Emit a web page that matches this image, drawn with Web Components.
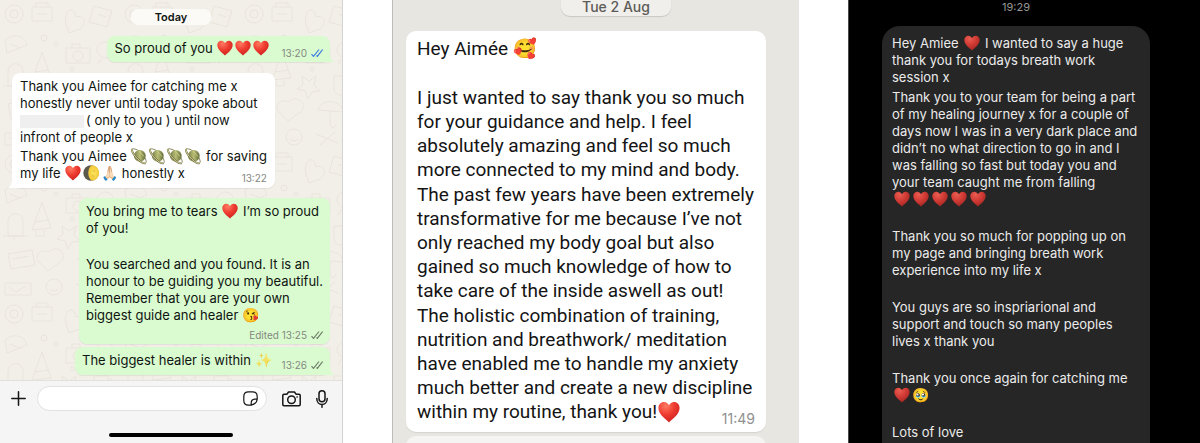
<!DOCTYPE html>
<html lang="en">
<head>
<meta charset="utf-8">
<meta name="viewport" content="width=device-width, initial-scale=1">
<title>Client messages</title>
<style>
body { margin: 0; background: #fff; }
</style>
</head>
<body>
<message-gallery>
  <chat-screen>
    <date-pill>Today</date-pill>
    <chat-bubble side="out" inline tail>
      <p>So proud of you <chat-emoji name="heart"></chat-emoji><chat-emoji name="heart"></chat-emoji><chat-emoji name="heart"></chat-emoji></p>
      <message-meta slot="meta" ticks="read">13:20</message-meta>
    </chat-bubble>
    <chat-bubble side="in" tail>
      <p>Thank you Aimee for catching me x<br>honestly never until today spoke about<br><redacted-name></redacted-name>( only to you ) until now<br>infront of people x</p>
      <p>Thank you Aimee <chat-emoji name="planet"></chat-emoji><chat-emoji name="planet"></chat-emoji><chat-emoji name="planet"></chat-emoji><chat-emoji name="planet"></chat-emoji> for saving<br>my life <chat-emoji name="heart"></chat-emoji><chat-emoji name="moon"></chat-emoji><chat-emoji>🙏🏻</chat-emoji> honestly x</p>
      <message-meta slot="meta">13:22</message-meta>
    </chat-bubble>
    <chat-bubble side="out" stacked>
      <p>You bring me to tears <chat-emoji name="heart"></chat-emoji> I’m so proud<br>of you!<br><br></p>
      <p>You searched and you found. It is an<br>honour to be guiding you my beautiful.<br>Remember that you are your own<br>biggest guide and healer <chat-emoji>😘</chat-emoji></p>
      <message-meta slot="meta" ticks="sent">Edited 13:25</message-meta>
    </chat-bubble>
    <chat-bubble side="out" inline tall tail>
      <p>The biggest healer is within <chat-emoji faded>✨</chat-emoji></p>
      <message-meta slot="meta" ticks="sent">13:26</message-meta>
    </chat-bubble>
    <chat-composer slot="footer"></chat-composer>
  </chat-screen>

  <letter-screen>
    <span slot="date">Tue 2 Aug</span>
    <p>Hey Aimée <chat-emoji>🥰</chat-emoji><br><br></p>
    <p>I just wanted to say thank you so much<br>for your guidance and help. I feel<br>absolutely amazing and feel so much<br>more connected to my mind and body.</p>
    <p>The past few years have been extremely<br>transformative for me because I’ve not<br>only reached my body goal but also<br>gained so much knowledge of how to<br>take care of the inside aswell as out!</p>
    <p>The holistic combination of training,<br>nutrition and breathwork/ meditation<br>have enabled me to handle my anxiety<br>much better and create a new discipline<br>within my routine, thank you!<chat-emoji name="heart"></chat-emoji></p>
    <time slot="time">11:49</time>
  </letter-screen>

  <dark-screen>
    <time slot="time">19:29</time>
    <p>Hey Amiee <chat-emoji name="heart"></chat-emoji> I wanted to say a huge<br>thank you for todays breath work<br>session x</p>
    <p>Thank you to your team for being a part<br>of my healing journey x for a couple of<br>days now I was in a very dark place and<br>didn’t no what direction to go in and I<br>was falling so fast but today you and<br>your team caught me from falling<br><chat-emoji name="heart"></chat-emoji><chat-emoji name="heart"></chat-emoji><chat-emoji name="heart"></chat-emoji><chat-emoji name="heart"></chat-emoji><chat-emoji name="heart"></chat-emoji><br><br></p>
    <p>Thank you so much for popping up on<br>my page and bringing breath work<br>experience into my life x<br><br></p>
    <p>You guys are so inspriarional and<br>support and touch so many peoples<br>lives x thank you<br><br></p>
    <p>Thank you once again for catching me<br><chat-emoji name="heart"></chat-emoji><chat-emoji>🥹</chat-emoji><br><br></p>
    <p>Lots of love</p>
  </dark-screen>
</message-gallery>

<script>
const define = (tag, html, setup) => {
  const template = document.createElement('template');
  template.innerHTML = html;
  customElements.define(tag, class extends HTMLElement {
    connectedCallback() {
      if (this.shadowRoot) return;
      const root = this.attachShadow({ mode: 'open' });
      root.append(template.content.cloneNode(true));
      if (setup) setup(this, root);
    }
  });
};

define('message-gallery', `
<style>
:host { display: grid; grid-template-columns: 343fr 407fr 352fr; column-gap: 49px; height: 100vh; overflow: hidden; }
</style>
<slot></slot>`);

define('chat-screen', `
<style>
:host { display: flex; flex-direction: column; position: relative; box-sizing: border-box; min-width: 0; overflow: hidden;
  background: #f2efe8; border-right: 1px solid #d2d2d0; font: 13px/17px Inter, "Liberation Sans", sans-serif; color: #101510; }
.wall { position: absolute; inset: 0; width: 100%; height: 100%; }
.thread { position: relative; flex: 1; display: flex; flex-direction: column; padding: 9px 12px 0; }
</style>
<svg class="wall" aria-hidden="true">
  <defs>
    <pattern id="doodle" width="120" height="150" patternUnits="userSpaceOnUse">
      <g fill="none" stroke="#e9e4db" stroke-width="1">
        <circle cx="14" cy="14" r="9"/><circle cx="14" cy="14" r="4"/>
        <path d="M32 7h20v14H32zM36 7v-4h12v4M37 14h10"/>
        <path d="M66 24c-3-14 8-20 10-7 8-3 12 6 4 12l-11 4z"/>
        <path d="M94 6l18 5-5 16-18-5zM98 14l8 3"/>
        <path d="M5 40c8-7 20-5 22 5l-20 8zM10 44l10 4"/>
        <circle cx="44" cy="38" r="3"/><circle cx="56" cy="44" r="2"/>
        <path d="M42 52l9 26-19 2zM35 72l14-2M36 81v5h8v-6"/>
        <path d="M66 48h24v15H66zM72 48v-4h8v4"/><circle cx="78" cy="56" r="5"/>
        <path d="M104 42c12 0 12 15 2 16-10-1-13-13-2-16zM101 59l-3 6"/>
        <path d="M8 72c0-11 15-11 15 0v14H8zM3 86h25M14 86v4"/>
        <path d="M62 76l7 5 7-5-2 9 6 6-8 1-4 7-3-8-8-2 6-5z"/>
        <path d="M94 76h14v13c0 8-14 8-14 0zM108 79c8-2 8 10 0 9"/>
        <path d="M8 104l24-4 3 15-24 4zM13 109l16-3"/>
        <path d="M48 102c10-9 22 4 11 11l-11 8-9-9c-6-7 3-14 9-10z"/>
        <path d="M78 110c4-13 24-10 25 2zM90 110v14c0 5 6 4 6 0"/>
        <path d="M5 133h26v12H5zM9 137l7 5 10-6"/>
        <circle cx="54" cy="137" r="8"/><path d="M50 139q4 4 8 0M76 134l22 9M80 145l15-13"/>
        <circle cx="110" cy="132" r="3"/><circle cx="72" cy="69" r="2"/><circle cx="114" cy="99" r="2"/>
      </g>
    </pattern>
  </defs>
  <rect width="100%" height="100%" fill="url(#doodle)"/>
</svg>
<div class="thread"><slot></slot></div>
<slot name="footer"></slot>`);

define('date-pill', `
<style>
:host { display: block; align-self: center; padding: 0 24px; margin-bottom: 11px; border-radius: 7px; background: #fbfaf7;
  font-size: 11px; line-height: 16px; font-weight: 600; }
</style>
<slot></slot>`);

define('chat-bubble', `
<style>
:host { display: grid; position: relative; box-sizing: border-box; padding: 5px 8px 6px; border-radius: 8px; white-space: nowrap; box-shadow: 0 1px 1px #00000010; }
:host([side="in"]) { align-self: flex-start; margin-bottom: 10px; background: #fff; }
:host([side="out"]) { align-self: flex-end; background: #dafbd0; margin-bottom: 3px; }
:host([inline]) { display: flex; align-items: center; gap: 11px; padding: 4px 7px 5px; margin-bottom: 11px; }
:host([tall]) { padding: 5px 7px 6px; gap: 9px; margin-bottom: 5px; }
:host([stacked]) { padding: 5px 7px 3px; }
.text { grid-area: 1 / 1; }
::slotted(p) { margin: 0 0 2px; }
::slotted(p:last-of-type) { margin: 0; }
.meta { grid-area: 1 / 1; align-self: end; justify-self: end; margin-bottom: -2px; }
:host([stacked]) .meta { grid-area: 2 / 1; margin: 5px 0 0; }
:host([inline]) .meta { margin-bottom: -2px; align-self: flex-end; }
svg { display: none; position: absolute; bottom: 0; width: 12px; height: 10px; }
:host([tail]) svg { display: block; }
:host([side="out"]) svg { right: -4px; fill: #dafbd0; }
:host([side="in"]) svg { left: -4px; fill: #fff; transform: scaleX(-1); }
</style>
<svg viewBox="0 0 12 10" aria-hidden="true"><path d="M0 10V0h8c0 5 1 8 4 9.600Q11 10 10 10z"/></svg>
<div class="text"><slot></slot></div>
<div class="meta"><slot name="meta"></slot></div>`);

define('message-meta', `
<style>
:host { display: flex; align-items: center; gap: 4px; font-size: 10px; line-height: 12px; color: #84887f; }
svg { display: none; width: 12px; height: 8px; fill: none; stroke-width: 1.200; }
:host([ticks]) svg { display: block; }
:host([ticks="read"]) svg { stroke: #3d7fe0; }
:host([ticks="sent"]) svg { stroke: #6f7f69; }
</style>
<span><slot></slot></span>
<svg viewBox="0 0 12 8" aria-hidden="true"><path d="M.5 5.200 2.500 7.400 8 .5M5.500 6.600l.8.8L11.600.5"/></svg>`);

define('redacted-name', `
<style>
:host { display: inline-block; width: 64px; height: 13px; margin: 0 2px 0 0; vertical-align: -3px; background: #efefef; }
</style>`);

const EMOJI = {
  heart: ['❤️', `<defs><radialGradient id="g" cx=".35" cy=".2" r=".85"><stop offset="0" stop-color="var(--heart-light, #ff7a62)"/><stop offset=".5" stop-color="var(--heart-mid, #ee3b30)"/><stop offset="1" stop-color="var(--heart-dark, #c9201d)"/></radialGradient></defs>
    <path fill="url(#g)" d="M8 15.600C6.400 13.700.3 10.200.3 5.100.3 2.400 2.100.7 4.300.7 6 .7 7.300 1.600 8 3.200 8.700 1.600 10 .7 11.700.7c2.200 0 4 1.700 4 4.400 0 5.100-6.100 8.600-7.700 10.500z"/>`],
  planet: ['🪐', `<defs><linearGradient id="g" x1="0" x2="1"><stop offset="0" stop-color="#77804a"/><stop offset=".5" stop-color="#b9bd74"/><stop offset="1" stop-color="#5f6835"/></linearGradient></defs>
    <path d="M1 1c3-1 8 2 11 6s4 7 2.500 8" fill="none" stroke="#8a8858" stroke-width="1"/>
    <circle cx="8.800" cy="7.800" r="5.900" fill="url(#g)"/>
    <path d="M8 3l5 5.500" stroke="#d8d795" stroke-width=".8"/>
    <path d="M1 1c-.8 2 2.500 7 6 10.300s6.500 4.700 7.500 3.700" fill="none" stroke="#6b6a42" stroke-width="1.900"/>
    <path d="M1 1c-.8 2 2.500 7 6 10.300s6.500 4.700 7.500 3.700" fill="none" stroke="#e4dfa6" stroke-width="1"/>`],
  moon: ['🌗', `<defs><radialGradient id="g"><stop offset="0" stop-color="#ffe75c"/><stop offset="1" stop-color="#f0c838"/></radialGradient></defs>
    <circle cx="8" cy="8" r="7.700" fill="#5a594c"/><path d="M8.500.3a7.700 7.700 0 0 1 0 15.400C4.200 12 4.200 4 8.500.3z" fill="url(#g)"/><circle cx="11" cy="6" r="1.200" fill="#ecc845"/><circle cx="10" cy="11" r="1.400" fill="#ecc845"/>`]
};

define('chat-emoji', `
<style>
:host { display: inline-block; width: var(--emoji-box, 18px); height: var(--emoji-size, 16px); line-height: var(--emoji-size, 16px);
  font-size: var(--emoji-font, 14px); vertical-align: text-bottom; text-align: center; white-space: nowrap; }
:host([faded]) { opacity: .7; }
svg { display: block; width: var(--emoji-size, 16px); height: var(--emoji-size, 16px); margin: 0 auto; overflow: visible; }
</style>
<slot></slot>`, (host, root) => {
  const art = EMOJI[host.getAttribute('name')];
  if (!art) return;
  const holder = document.createElement('template');
  holder.innerHTML = `<svg viewBox="0 0 16 16" role="img" aria-label="${art[0]}">${art[1]}</svg>`;
  root.querySelector('slot').replaceWith(holder.content);
});

define('chat-composer', `
<style>
:host { display: block; position: relative; background: #f5f5f5; border-top: 1px solid #e2e1de; }
form { display: flex; align-items: center; padding: 5px 14px 0 11px; margin: 0; }
button { display: block; flex: none; margin: 0; padding: 0; border: 0; background: none; color: #161616; }
svg { display: block; fill: none; stroke: currentColor; stroke-width: 1.500; stroke-linecap: round; stroke-linejoin: round; }
.field { flex: 1; min-width: 0; display: flex; align-items: center; box-sizing: border-box; height: 25px; margin: 0 15px 0 11px; padding: 0 8px 0 12px; border: 1px solid #e1e1e1; border-radius: 13px; background: #fff; }
.field svg { stroke-width: 1.200; }
input { flex: 1; min-width: 0; border: 0; padding: 0; outline: 0; background: none; font: inherit; }
.mic { margin-left: 15px; }
.home { width: 36%; height: 4px; margin: 22px auto 7px; border-radius: 2px; background: #000; }
</style>
<form>
  <button type="button" aria-label="Attach"><svg width="15" height="15" viewBox="0 0 15 15"><path d="M7.500.8v13.400M.8 7.500h13.400"/></svg></button>
  <div class="field">
    <input type="text" aria-label="Message">
    <button type="button" aria-label="Stickers"><svg width="15" height="15" viewBox="0 0 15 15"><path d="M8.200 14.200H5.500Q.8 14.200.8 9.500v-4Q.8.8 5.500.8h4q4.700 0 4.700 4.700v2.700q-.5 4.500-6 6zM8.200 14.200V12q0-3.500 3.500-3.800h2.500"/></svg></button>
  </div>
  <button type="button" aria-label="Camera"><svg width="19" height="16" viewBox="0 0 19 16"><path d="M2 3.200h3L6.500 1h6L14 3.200h3q1.200 0 1.200 1.200v9.200q0 1.200-1.200 1.200H2q-1.200 0-1.200-1.200V4.400Q.8 3.200 2 3.200z"/><circle cx="9.500" cy="8.700" r="3.800"/><path d="M15 6h.2"/></svg></button>
  <button class="mic" type="button" aria-label="Voice message"><svg width="12" height="18" viewBox="0 0 12 18"><rect x="3" y=".8" width="6" height="11" rx="3"/><path d="M.8 8.500c0 8 10.400 8 10.400 0M6 14.700v2.500"/></svg></button>
</form>
<div class="home"></div>`);

define('letter-screen', `
<style>
:host { display: flex; flex-direction: column; box-sizing: border-box; min-width: 0; overflow: hidden; padding: 0 33px 0 13px;
  background: #e8e6e1; border-left: 1px solid #bdbdbb; color: #141414; font: 19px/24px Roboto, "Liberation Sans", sans-serif;
  --emoji-box: 24px; --emoji-size: 22px; --emoji-font: 19px; }
.date { align-self: center; margin: 0 0 15px 60px; padding: 0 21px 3px; border-radius: 0 0 9px 9px; background: #f1efeb; box-shadow: 0 1px 1px #00000022;
  font: 500 14px/13px Inter, "Liberation Sans", sans-serif; color: #5c5b58; }
.bubble { display: grid; padding: 6px 11px 8px; border-radius: 10px; background: #fff; box-shadow: 0 1px 1px #00000014; white-space: nowrap; }
.text, .time { grid-area: 1 / 1; }
::slotted(p) { margin: 0 0 1px; }
::slotted(p:last-of-type) { margin: 0; }
.time { place-self: end; margin-bottom: -3px; font: 14px/16px Inter, "Liberation Sans", sans-serif; color: #8f8f8f; }
.next { flex: none; height: 24px; margin-top: 4px; border-radius: 10px; background: #f5f4f2; }
</style>
<div class="date"><slot name="date"></slot></div>
<div class="bubble"><div class="text"><slot></slot></div><div class="time"><slot name="time"></slot></div></div>
<div class="next"></div>`);

define('dark-screen', `
<style>
:host { display: flex; flex-direction: column; box-sizing: border-box; min-width: 0; overflow: hidden; padding: 0 50px 0 33px;
  background: #000; border-left: 1px solid #4a4a4a; color: #ebebeb; font: 13px/17px Inter, "Liberation Sans", sans-serif;
  --emoji-box: 19px; --heart-light: #ea5c50; --heart-mid: #d03a34; --heart-dark: #9d2421; }
.time { align-self: center; margin-bottom: 12px; font-size: 11px; line-height: 14px; color: #969696; }
.bubble { flex: 1; padding: 9px 10px; border-radius: 18px 18px 0 0; background: #262626; white-space: nowrap; }
::slotted(p) { margin: 0 0 3px; }
</style>
<div class="time"><slot name="time"></slot></div>
<div class="bubble"><slot></slot></div>`);
</script>
</body>
</html>
